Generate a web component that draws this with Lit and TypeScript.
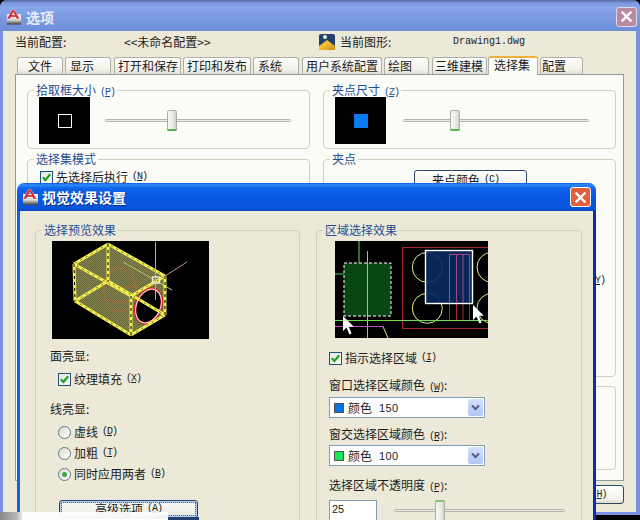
import { LitElement, html, css, svg } from "lit";
import { customElement } from "lit/decorators.js";

const mn = (c: string) => html`<span class="mn">(<u>${c}</u>)</span>`;

const TABS: [string, number, number, number][] = [
  ["文件", 17, 46, 10],
  ["显示", 65, 46, 4],
  ["打开和保存", 114, 67, 3],
  ["打印和发布", 183, 68, 3],
  ["系统", 253, 46, 4],
  ["用户系统配置", 302, 80, 3],
  ["绘图", 384, 45, 3],
  ["三维建模", 432, 55, 2],
  ["选择集", 488, 50, 5],
  ["配置", 540, 43, 1],
];
const ACTIVE = 8;

const acadIcon = (w: number, h: number) => html`<svg class="ico" width=${w} height=${h} viewBox="0 0 16 16">
  <defs><linearGradient id="ig" x1="0" y1="0" x2="0" y2="1"><stop offset="0" stop-color="#f6f6f6"/><stop offset="0.55" stop-color="#d8d8d8"/><stop offset="1" stop-color="#3c3c3c"/></linearGradient></defs>
  <rect x="1" y="5" width="15" height="11" fill="url(#ig)"/>
  <path d="M1 10 6.5 0.5h2.5l5.5 9.5H11.5L10.5 8H5.3L4 10ZM6.3 5.9h3.2L7.8 2.6Z" fill="#d9202a" stroke="#fff" stroke-width="0.4"/>
</svg>`;

const closeX = html`<svg width="11" height="11" viewBox="0 0 11 11"><path d="M1.5 1.5 9.5 9.5M9.5 1.5 1.5 9.5" stroke="#fff" stroke-width="2.4" stroke-linecap="square"/></svg>`;

const check = html`<span class="cb"><svg width="11" height="11" viewBox="0 0 11 11"><path d="M1.8 5.2 4.4 8 9.2 2.2" fill="none" stroke="#21a121" stroke-width="2.2"/></svg></span>`;

const cursor = (x: number, y: number) => svg`<path transform="translate(${x} ${y})" d="M0 0V15L3.5 11.5 6.5 18.5 8.5 17.5 5.8 10.8H10.8Z" fill="#fff"/>`;

const VERT: [number, number, number, number][] = [[22, 23, 23, 60], [113, 74, 113, 35], [79, 55, 79, 94], [56, 3, 56, 40]];
const SLOPE: [number, number, number, number][] = [
  [23, 60, 79, 94], [79, 94, 113, 74], [113, 35, 56, 3], [56, 3, 22, 23],
  [79, 55, 22, 23], [79, 55, 113, 35], [56, 40, 23, 60], [56, 40, 113, 74],
];

const preview1 = html`<svg class="shot" width="157" height="98" viewBox="0 0 157 98">
  <defs><pattern id="hatch" width="2" height="2" patternUnits="userSpaceOnUse"><rect width="2" height="2" fill="#6a6a40"/><rect width="1" height="1" fill="#86864e"/><rect x="1" y="1" width="1" height="1" fill="#7c7c4a"/></pattern></defs>
  <rect width="157" height="98" fill="#000"/>
  <path d="M56 3 113 35V74L79 94 23 60 22 23Z" fill="url(#hatch)"/>
  <ellipse cx="68" cy="49" rx="16" ry="22" fill="none" stroke="#b5683c" stroke-width="1"/>
  <path d="M53 40Q68 52 84 44M53 58Q68 64 82 58" fill="none" stroke="#b5683c" stroke-width="1"/>
  <line x1="71" y1="21" x2="120" y2="49" stroke="#b8c878" stroke-width="1"/>
  <line x1="113" y1="35" x2="135" y2="21" stroke="#c89090" stroke-width="1"/>
  <ellipse cx="96.5" cy="65" rx="12.5" ry="18" transform="rotate(22 96.5 65)" fill="#000" stroke="#d02030" stroke-width="2.5"/>
  <ellipse cx="96.5" cy="65" rx="12" ry="17.5" transform="rotate(22 96.5 65)" fill="none" stroke="#f4e8e8" stroke-width="1"/>
  ${SLOPE.map((e) => svg`<line x1=${e[0]} y1=${e[1]} x2=${e[2]} y2=${e[3]} stroke="#f4f050" stroke-width="3"/><line x1=${e[0]} y1=${e[1]} x2=${e[2]} y2=${e[3]} stroke="#3a3a10" stroke-width="0.7" stroke-dasharray="2 4"/>`)}
  ${VERT.map((e) => svg`<line x1=${e[0]} y1=${e[1]} x2=${e[2]} y2=${e[3]} stroke="#f4f050" stroke-width="3"/><line x1=${e[0]} y1=${e[1]} x2=${e[2]} y2=${e[3]} stroke="#000" stroke-width="1" stroke-dasharray="3 3"/>`)}
  <line x1="103.5" y1="1" x2="103.5" y2="59" stroke="#a8a8c8" stroke-width="1"/>
  <rect x="100.5" y="36" width="7" height="6" fill="none" stroke="#e8f0e0" stroke-width="1.4"/>
</svg>`;

const preview2 = html`<svg class="shot" width="153" height="97" viewBox="0 0 153 97">
  <rect width="153" height="97" fill="#000"/>
  <path d="M0 33H24V0" fill="none" stroke="#5bdc5b" stroke-width="1"/>
  <rect x="9" y="22" width="47" height="53" fill="#0a4514" stroke="#fff" stroke-width="1" stroke-dasharray="3 2"/>
  <rect x="67.5" y="6.5" width="90" height="81" fill="none" stroke="#a82830" stroke-width="1"/>
  <circle cx="92.3" cy="26.3" r="15" fill="none" stroke="#d8f08c"/>
  <circle cx="92.3" cy="67.3" r="15" fill="none" stroke="#d8f08c"/>
  <circle cx="157" cy="26.3" r="15" fill="none" stroke="#d8f08c"/>
  <circle cx="157" cy="67.3" r="15" fill="none" stroke="#d8f08c"/>
  <path d="M114.5 13.5H134.5V79.5H114.5ZM121.5 13.5V79.5M128 13.5V79.5" fill="none" stroke="#a82830"/>
  <rect x="90.5" y="9.5" width="47" height="53" fill="#0a2960" fill-opacity="0.92" stroke="#fff" stroke-width="1.4"/>
  <path d="M114.5 13.5H134.5V62M114.5 13.5V62M121.5 13.5V62M128 13.5V62" fill="none" stroke="#a04a80"/>
  <line x1="32.5" y1="10" x2="32.5" y2="97" stroke="#62d8c0"/>
  <line x1="0" y1="79.5" x2="153" y2="79.5" stroke="#6cdc4c"/>
  <line x1="0" y1="85.5" x2="48" y2="85.5" stroke="#c848c8"/>
  <path d="M48 85.5 53 97" stroke="#d8e88c" fill="none"/>
  ${cursor(8, 75)}
  ${cursor(138, 64)}
</svg>`;

@customElement("app-slider")
class AppSlider extends LitElement {
  static properties = { at: { type: Number }, up: { type: Boolean } };
  at = 0;
  up = false;
  static styles = css`
    :host { display: block; position: relative; height: 22px; }
    .track { position: absolute; left: 0; right: 0; top: 9px; height: 3px; box-sizing: border-box; background: #ecece6; border: 1px solid #b4b4ac; border-radius: 2px; }
    .thumb { position: absolute; top: 0; width: 10px; height: 21px; box-sizing: border-box; border: 1px solid #a8b0a8; border-radius: 2px; background: linear-gradient(90deg, #f8f8f4, #e8e8e0 70%, #cfcfc8); }
    .thumb::after { content: ""; position: absolute; left: -1px; right: -1px; bottom: -1px; height: 2px; background: #54b454; border-radius: 0 0 2px 2px; }
    .thumb.up::after { bottom: auto; top: -1px; background: #78c878; border-radius: 2px 2px 0 0; }
  `;
  render() {
    return html`<div class="track"></div><div class="thumb ${this.up ? "up" : ""}" style="left:${this.at}px"></div>`;
  }
}

@customElement("app-root")
export class AppRoot extends LitElement {
  static styles = css`
    :host { display: block; position: relative; width: 640px; height: 520px; overflow: hidden; background: #000;
      font: 12px/14px "Noto Sans CJK SC", "Liberation Sans", sans-serif; color: #1c1c1c; }
    * { box-sizing: border-box; }
    .mn { font: 10px/14px "Liberation Mono", monospace; margin-left: 4px; letter-spacing: -1px; }
    .lb { height: 14px; white-space: nowrap; }
    .win { position: absolute; display: flex; flex-direction: column; }
    .back { left: 0; top: 0; width: 640px; height: 515px; background: #7c8fe2; border-radius: 7px 7px 0 0; padding: 0 4px 3px 3px; }
    .tbar { flex: none; display: flex; align-items: center; }
    .back .tbar { height: 31px; margin: 0 -4px 0 -3px; padding: 2px 3px 0 6px; border-radius: 7px 7px 0 0;
      background: linear-gradient(#56679f 0, #7b98df 3px, #88a5e8 7px, #7b9ae1 55%, #6d8ed9 100%); }
    .back .ttl { margin-left: 5px; font-size: 14px; font-weight: 700; color: #e8edf8; flex: 1; }
    .close { flex: none; width: 21px; height: 20px; border-radius: 3px; display: grid; place-items: center; }
    .back .close { background: #b98aa0; border: 1px solid #e2d8e4; }
    .back .body { flex: 1; background: #ece9d8; padding: 2px 0 0 12px; display: flex; flex-direction: column; }
    .cfg { display: grid; grid-template-columns: 109px 195px 21px 113px auto; height: 16px; align-items: center; line-height: 16px; }
    .file { font: 10px/16px "Liberation Mono", monospace; }
    .tabs { display: flex; align-items: flex-end; height: 19px; margin: 6px 0 0 2px; }
    .tab { height: 17px; flex: none; border: 1px solid #aeb0a8; border-bottom: none; border-radius: 3px 3px 0 0; line-height: 15px; white-space: nowrap; background: linear-gradient(#fff, #f2f1ea 70%, #e0dfd6); }
    .tab.on { height: 19px; background: #fcfcf9; border-top: 2px solid #f0b040; position: relative; z-index: 1; margin-bottom: -1px; line-height: 14px; }
    .pane { width: 609px; height: 407px; border: 1px solid #919b9c; background: #fbfbf8; padding: 8px 0 0 11px; display: grid; grid-template-columns: 283px 293px; column-gap: 13px; align-content: start; }
    .col { display: flex; flex-direction: column; gap: 3px; }
    fieldset { margin: 0; padding: 0; min-width: 0; border: 1px solid #d0d0bf; border-radius: 4px; }
    legend { margin-left: 6px; padding: 0 2px; height: 14px; line-height: 14px; color: #1f4f94; white-space: nowrap; }
    .g1 { height: 66px; }
    .row { display: flex; align-items: center; }
    .g1 .row { padding-left: 11px; }
    .pic { width: 51px; height: 47px; background: #000; flex: none; display: grid; place-items: center; }
    .sq { width: 14px; height: 14px; border: 1px solid #fff; }
    .sq.blue { background: #0a7cf0; border: none; }
    .g1 app-slider { width: 186px; margin-left: 15px; }
    .g2 { height: 225px; }
    .g3 { height: 84px; margin-top: 6px; }
    .chk { display: flex; align-items: center; height: 14px; white-space: nowrap; }
    .cb { flex: none; width: 13px; height: 13px; margin-right: 3px; border: 1px solid #1c5180; background: linear-gradient(135deg, #e6e6de, #fbfbf8); display: grid; place-items: center; }
    .rd { flex: none; width: 13px; height: 13px; margin-right: 3px; border: 1px solid #5a7890; border-radius: 50%; background: linear-gradient(135deg, #dcdcd2, #fff); display: grid; place-items: center; }
    .rd i { width: 5px; height: 5px; border-radius: 50%; background: #3aa83a; }
    .btn { height: 20px; border: 1px solid #2d4a6c; border-radius: 3px; background: linear-gradient(#fff, #f2f1ea 80%, #dcd8c8); display: flex; align-items: center; justify-content: center; white-space: nowrap; }
    .gripbtn { width: 113px; margin: 4px 0 0 90px; }
    .y { margin: 81px 0 0 262px; height: 14px; }
    .foot { display: flex; justify-content: flex-end; margin-top: 4px; width: 609px; }
    .help { width: 80px; height: 19px; padding-left: 2px; }

    .dlg { left: 17px; top: 183px; width: 579px; height: 400px; }
    .dlg .tbar { height: 28px; padding: 0 5px 0 5px; border-radius: 7px 7px 0 0;
      background: linear-gradient(#0a5ce4 0, #2f8cf8 2px, #0f64ea 5px, #0758e4 50%, #0a55dc 85%, #0848c4 100%); }
    .dlg .ttl { margin-left: 4px; font-size: 14px; font-weight: 700; color: #fff; text-shadow: 1px 1px 0 #0a2f90; flex: 1; }
    .dlg .close { background: #e0603e; border: 1px solid #fff; }
    .dlg .frame { flex: 1; border-left: 3px solid #1262dc; border-right: 3px solid #0a2fa6; background: #ece9d8; padding: 12px 0 0 15px; display: grid; grid-template-columns: 265px 266px; column-gap: 16px; }
    .dlg fieldset { height: 300px; }
    .stack { display: flex; flex-direction: column; align-items: flex-start; }
    .l .stack { margin-left: 16px; }
    .l .lb { margin-left: -2px; }
    .r .stack { margin-left: 12px; }
    .shot { display: block; }
    .sel { width: 156px; height: 21px; border: 1px solid #7f9db9; background: #fff; display: flex; align-items: center; padding: 0 1px 0 4px; }
    .sw { width: 10px; height: 10px; border: 1px solid #555; margin-right: 4px; flex: none; }
    .sw.b { background: #0a73e4; }
    .sw.g { background: #19e650; }
    .num { font: 11px/14px "Liberation Sans", sans-serif; margin-left: 7px; letter-spacing: 0.4px; flex: 1; }
    .dd { width: 15px; height: 17px; border-radius: 2px; background: linear-gradient(#d4e0fc, #b2c6f6); display: grid; place-items: center; flex: none; }
    .inp { width: 48px; height: 22px; border: 1px solid #7f9db9; background: #fff; padding: 1px 0 0 2px; font: 11px/14px "Liberation Sans", sans-serif; }
    .adv { width: 139px; height: 18px; border: 1px solid #24406c; background: linear-gradient(#fbfbf8, #ecebe0); outline: 1px dotted #3a6ab0; outline-offset: -3px; box-shadow: inset 0 0 0 2px #b8cef0; }
    .veil { position: absolute; left: 0; top: 512px; width: 168px; height: 8px; background: linear-gradient(90deg, #888 0, #b8b8b8 10%, rgba(255,255,255,.95) 14%, rgba(255,255,255,.9) 100%); }
    .veil2 { position: absolute; left: 168px; top: 517px; width: 31px; height: 3px; background: #24406c; }
  `;

  render() {
    let prev = 17;
    return html`
      <div class="win back">
        <div class="tbar">${acadIcon(15, 16)}<span class="ttl">选项</span><div class="close">${closeX}</div></div>
        <div class="body">
          <div class="cfg">
            <span>当前配置:</span>
            <span>&lt;&lt;未命名配置&gt;&gt;</span>
            <svg width="16" height="17" viewBox="0 0 16 17"><defs><linearGradient id="fg" x1="0" y1="0" x2="1" y2="1"><stop offset="0.45" stop-color="#f0c030"/><stop offset="1" stop-color="#c89010"/></linearGradient></defs><rect y="1" width="16" height="16" rx="2" fill="#23406c"/><path d="M0 13 8 7l8 6v3a1 1 0 0 1-1 1H0Z" fill="url(#fg)"/><circle cx="6" cy="4" r="2" fill="#f4f4e8"/></svg>
            <span>当前图形:</span>
            <span class="file">Drawing1.dwg</span>
          </div>
          <div class="tabs">
            ${TABS.map((t, i) => {
              const ml = t[1] - prev;
              prev = t[1] + t[2];
              return html`<div class="tab ${i === ACTIVE ? "on" : ""}" style="margin-left:${ml}px;width:${t[2]}px;padding-left:${t[3]}px">${t[0]}</div>`;
            })}
          </div>
          <div class="pane">
            <div class="col">
              <fieldset class="g1"><legend>拾取框大小${mn("P")}</legend>
                <div class="row"><div class="pic"><div class="sq"></div></div><app-slider .at=${62}></app-slider></div>
              </fieldset>
              <fieldset class="g2"><legend>选择集模式</legend>
                <div class="chk" style="margin:4px 0 0 12px">${check}先选择后执行${mn("N")}</div>
              </fieldset>
            </div>
            <div class="col">
              <fieldset class="g1"><legend>夹点尺寸${mn("Z")}</legend>
                <div class="row"><div class="pic"><div class="sq blue"></div></div><app-slider .at=${47} style="margin-left:17px"></app-slider></div>
              </fieldset>
              <fieldset class="g2"><legend>夹点</legend>
                <div class="btn gripbtn">夹点颜色${mn("C")}...</div>
                <div class="y">${mn("Y")}</div>
              </fieldset>
              <fieldset class="g3"></fieldset>
            </div>
          </div>
          <div class="foot"><div class="btn help">帮助${mn("H")}</div></div>
        </div>
      </div>

      <div class="win dlg">
        <div class="tbar">${acadIcon(16, 16)}<span class="ttl">视觉效果设置</span><div class="close">${closeX}</div></div>
        <div class="frame">
          <fieldset class="l"><legend>选择预览效果</legend>
            <div class="stack">
              <div style="margin-top:4px">${preview1}</div>
              <div class="lb" style="margin-top:10px">面亮显:</div>
              <div class="chk" style="margin:9px 0 0 6px">${check}纹理填充${mn("X")}</div>
              <div class="lb" style="margin-top:16px">线亮显:</div>
              <div class="chk" style="margin:9px 0 0 6px"><span class="rd"></span>虚线${mn("D")}</div>
              <div class="chk" style="margin:7px 0 0 6px"><span class="rd"></span>加粗${mn("T")}</div>
              <div class="chk" style="margin:7px 0 0 6px"><span class="rd"><i></i></span>同时应用两者${mn("B")}</div>
              <div class="btn adv" style="margin:19px 0 0 7px">高级选项${mn("A")}</div>
            </div>
          </fieldset>
          <fieldset class="r"><legend>区域选择效果</legend>
            <div class="stack">
              <div style="margin:4px 0 0 6px">${preview2}</div>
              <div class="chk" style="margin-top:13px">${check}指示选择区域${mn("I")}</div>
              <div class="lb" style="margin-top:13px">窗口选择区域颜色${mn("W")}:</div>
              <div class="sel" style="margin-top:5px"><span class="sw b"></span>颜色<span class="num">150</span><span class="dd"><svg width="9" height="7" viewBox="0 0 9 7"><path d="M1 1.5 4.5 5 8 1.5" fill="none" stroke="#4d6185" stroke-width="2"/></svg></span></div>
              <div class="lb" style="margin-top:9px">窗交选择区域颜色${mn("R")}:</div>
              <div class="sel" style="margin-top:4px"><span class="sw g"></span>颜色<span class="num">100</span><span class="dd"><svg width="9" height="7" viewBox="0 0 9 7"><path d="M1 1.5 4.5 5 8 1.5" fill="none" stroke="#4d6185" stroke-width="2"/></svg></span></div>
              <div class="lb" style="margin-top:12px">选择区域不透明度${mn("P")}:</div>
              <div class="row" style="margin-top:8px"><div class="inp">25</div><app-slider .at=${41} .up=${true} style="width:171px;margin-left:17px"></app-slider></div>
            </div>
          </fieldset>
        </div>
      </div>
      <div class="veil2"></div>
      <div class="veil"></div>
    `;
  }
}
